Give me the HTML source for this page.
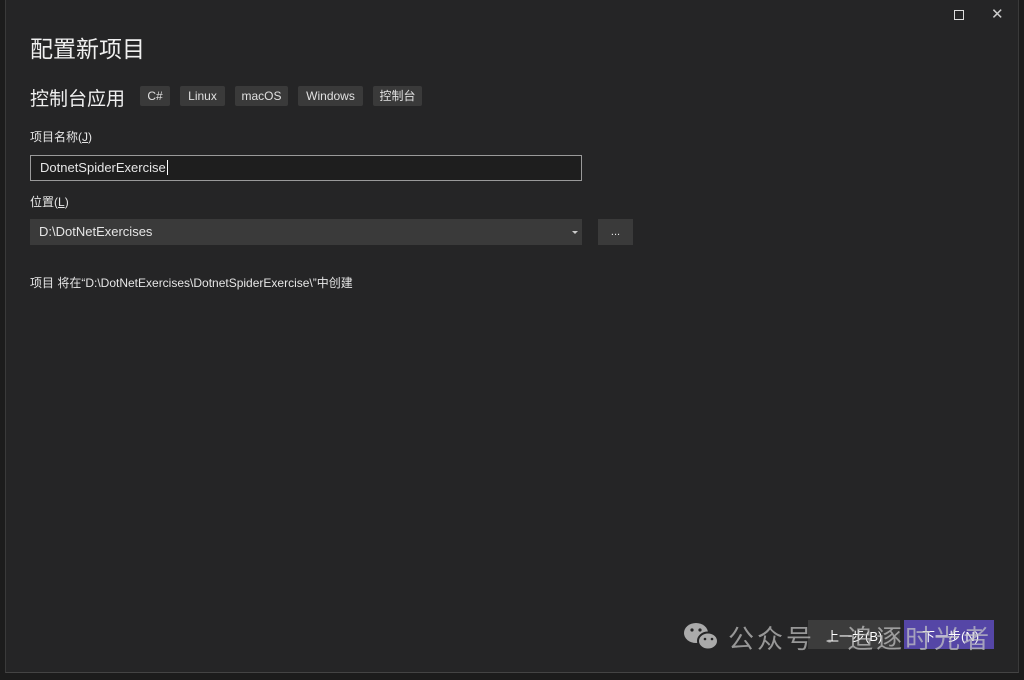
<!DOCTYPE html>
<html><head><meta charset="utf-8"><style>
*{margin:0;padding:0;box-sizing:border-box}
body{width:1024px;height:680px;background:#1c1c1c;position:relative;overflow:hidden;font-family:"Liberation Sans","Noto Sans CJK SC",sans-serif;color:#e6e6e6}
.win{position:absolute;left:5px;top:0;width:1014px;height:673px;background:#252526;border-right:1px solid #3a3a3a;border-bottom:1px solid #444;border-left:1px solid #3a3a3a}
.a{position:absolute;white-space:nowrap}
.tag{position:absolute;top:86px;height:20px;background:#3a3a3a;border-radius:2px;font-size:12px;line-height:20px;text-align:center;color:#e0e0e0}
</style></head><body>
<div class="win"></div>
<div class="a" style="left:954px;top:10px;width:10px;height:10px;border:1px solid #ddd"></div>
<div class="a" style="left:991px;top:5px;font-size:15px;color:#ccc">✕</div>
<div class="a" style="left:30px;top:30px;font-size:23px;color:#f0f0f0">配置新项目</div>
<div class="a" style="left:30px;top:84px;font-size:19px;color:#f0f0f0">控制台应用</div>
<div class="tag" style="left:140px;width:30px">C#</div>
<div class="tag" style="left:180px;width:45px">Linux</div>
<div class="tag" style="left:235px;width:53px">macOS</div>
<div class="tag" style="left:298px;width:65px">Windows</div>
<div class="tag" style="left:373px;width:49px">控制台</div>
<div class="a" style="left:30px;top:128px;font-size:12px">项目名称(<u>J</u>)</div>
<div class="a" style="left:30px;top:155px;width:552px;height:26px;border:1px solid #9a9a9a;background:#1e1e1e;font-size:13px;line-height:24px;padding-left:9px">DotnetSpiderExercise<span style="border-left:1px solid #fff;margin-left:1px"></span></div>
<div class="a" style="left:30px;top:193px;font-size:12px">位置(<u>L</u>)</div>
<div class="a" style="left:30px;top:219px;width:552px;height:26px;background:#3a3a3a;font-size:13px;line-height:26px;padding-left:9px">D:\DotNetExercises</div>
<div class="a" style="left:572px;top:231px;width:0;height:0;border-left:3px solid transparent;border-right:3px solid transparent;border-top:3px solid #ccc"></div>
<div class="a" style="left:598px;top:219px;width:35px;height:26px;background:#3a3a3a;font-size:11px;line-height:26px;text-align:center">...</div>
<div class="a" style="left:30px;top:274px;font-size:12px">项目 将在“D:\DotNetExercises\DotnetSpiderExercise\”中创建</div>
<div class="a" style="left:808px;top:620px;width:92px;height:29px;background:#3c3c3c"></div>
<div class="a" style="left:904px;top:620px;width:90px;height:29px;background:#5546a6"></div>
<div class="a" style="left:826px;top:626px;font-size:13px;color:#fff">上一步(B)</div>
<div class="a" style="left:922px;top:626px;font-size:13px;color:#fff">下一步(N)</div>
<svg class="a" style="left:682px;top:620px" width="40" height="34" viewBox="0 0 40 34"><ellipse cx="14" cy="13" rx="12" ry="10" fill="#aaa"/><ellipse cx="26" cy="21" rx="10" ry="8.5" fill="#aaa" stroke="#252526" stroke-width="2"/><circle cx="10" cy="10" r="1.6" fill="#252526"/><circle cx="18" cy="10" r="1.6" fill="#252526"/><circle cx="23" cy="19" r="1.3" fill="#252526"/><circle cx="30" cy="19" r="1.3" fill="#252526"/></svg>
<div class="a" style="left:728px;top:619px;font-size:26px;letter-spacing:3px;color:rgba(200,200,200,0.7)">公众号 · 追逐时光者</div>
</body></html>
